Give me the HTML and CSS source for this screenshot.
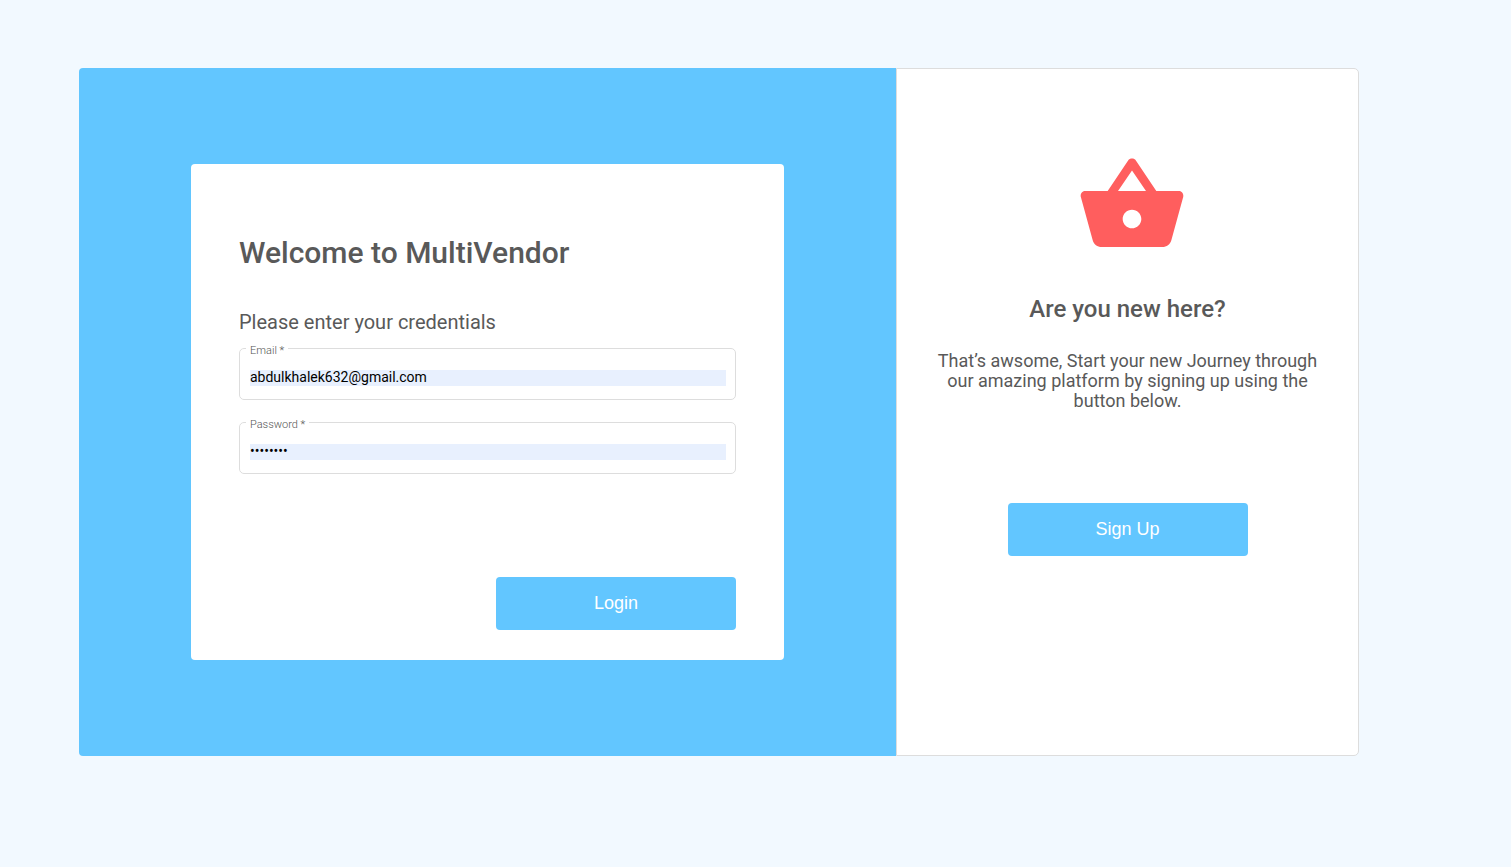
FILE: index.html
```html
<!DOCTYPE html>
<html lang="en">
<head>
<meta charset="utf-8">
<meta name="viewport" content="width=device-width, initial-scale=1">
<title>MultiVendor</title>
<link rel="stylesheet" href="styles.css">
</head>
<body>
<main class="shell">
  <section class="login-panel">
    <form class="login-form">
      <h1 class="title">Welcome to MultiVendor</h1>
      <p class="subtitle">Please enter your credentials</p>
      <fieldset class="field">
        <legend class="field-legend"><label for="email">Email *</label></legend>
        <input class="field-input" id="email" type="email" value="abdulkhalek632@gmail.com" required>
      </fieldset>
      <fieldset class="field">
        <legend class="field-legend"><label for="password">Password *</label></legend>
        <input class="field-input" id="password" type="password" value="12345678" required>
      </fieldset>
      <button class="button login-button" type="submit">Login</button>
    </form>
  </section>
  <section class="signup-panel">
    <div class="logo">
      <svg class="logo-icon" viewBox="0 0 24 24" aria-hidden="true"><path d="M17.21 9l-4.38-6.56c-.19-.28-.51-.42-.83-.42-.32 0-.64.14-.83.43L6.79 9H2c-.55 0-1 .45-1 1 0 .09.01.18.04.27l2.54 9.27c.23.84 1 1.46 1.92 1.46h13c.92 0 1.69-.62 1.93-1.46l2.54-9.27L23 10c0-.55-.45-1-1-1h-4.79zM9 9l3-4.4L15 9H9zm3 8c-1.1 0-2-.9-2-2s.9-2 2-2 2 .9 2 2-.9 2-2 2z"/></svg>
    </div>
    <h2 class="signup-title">Are you new here?</h2>
    <p class="signup-text">That’s awsome, Start your new Journey through our amazing platform by signing up using the button below.</p>
    <button class="button" type="button">Sign Up</button>
  </section>
</main>
</body>
</html>
```
FILE: styles.css
```css
* {
  box-sizing: border-box;
}

body {
  margin: 0;
  background: #f2f9ff;
  color: #595959;
  font-family: Roboto, "Liberation Sans", sans-serif;
}

h1, h2, p {
  margin: 0;
}

.shell {
  display: grid;
  grid-template-columns: 817fr 463fr;
  margin: 68px 152px 68px 79px;
}

.login-panel {
  padding: 96px 112px;
  background: #62c6ff;
  border-radius: 4px 0 0 4px;
}

.login-form {
  display: flex;
  flex-direction: column;
  padding: 71px 48px 30px;
  background: #fff;
  border-radius: 4px;
}

.title {
  font-size: 30px;
  font-weight: 500;
  line-height: 36px;
}

.subtitle {
  margin: 39px 0 10px;
  font-size: 20px;
  line-height: 24px;
}

.field {
  min-width: 0;
  margin: -4px 0 18px;
  padding: 13px 9px 13px 10px;
  border: 1px solid #ddd;
  border-radius: 5px;
}

.field-legend {
  margin-left: -4px;
  padding: 5px 4px 0 4px;
  color: #555;
  font-size: 11px;
  font-weight: 300;
  line-height: 12px;
}

.field-input {
  display: block;
  width: 100%;
  height: 16px;
  padding: 0 0 2px;
  border: 0;
  outline: 0;
  background: #e8f0fe;
  color: #000;
  font-family: inherit;
  font-size: 14px;
}

.button {
  width: 240px;
  max-width: 100%;
  padding: 16px;
  border: 0;
  border-radius: 4px;
  background: #62c6ff;
  color: #fff;
  font-family: "Liberation Sans", Arial, sans-serif;
  font-size: 18px;
  line-height: 21px;
}

.login-button {
  align-self: flex-end;
  margin-top: 85px;
}

.signup-panel {
  display: flex;
  flex-direction: column;
  align-items: center;
  padding: 80px 40px;
  background: #fff;
  border: 1px solid #ddd;
  border-radius: 0 5px 5px 0;
  text-align: center;
}

.logo {
  padding-left: 8px;
}

.logo-icon {
  display: block;
  width: 112px;
  height: 112px;
  fill: #ff5e5e;
}

.signup-title {
  margin-top: 34px;
  font-size: 24px;
  font-weight: 500;
  line-height: 28px;
}

.signup-text {
  margin: 28px 0 92px;
  font-size: 18px;
  line-height: 20px;
}
```
